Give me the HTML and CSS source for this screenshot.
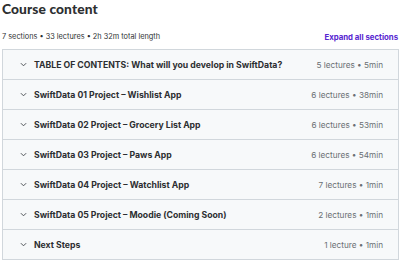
FILE: index.html
```html
<!DOCTYPE html>
<html>
<head>
<meta charset="utf-8">
<link rel="stylesheet" href="styles.css">
</head>
<body>
<div class="page">
  <h2 class="title">Course content</h2>
  <div class="meta">
    <span class="stats">7 sections • 33 lectures • 2h 32m total length</span>
    <span class="expand">Expand all sections</span>
  </div>
  <div class="list">
    <div class="row"><svg class="chev" viewBox="0 0 8 5"><path d="M1 1l3 3 3-3"/></svg><span class="name">TABLE OF CONTENTS: What will you develop in SwiftData?</span><span class="info">5 lectures • 5min</span></div>
    <div class="row"><svg class="chev" viewBox="0 0 8 5"><path d="M1 1l3 3 3-3"/></svg><span class="name">SwiftData 01 Project – Wishlist App</span><span class="info">6 lectures • 38min</span></div>
    <div class="row"><svg class="chev" viewBox="0 0 8 5"><path d="M1 1l3 3 3-3"/></svg><span class="name">SwiftData 02 Project – Grocery List App</span><span class="info">6 lectures • 53min</span></div>
    <div class="row"><svg class="chev" viewBox="0 0 8 5"><path d="M1 1l3 3 3-3"/></svg><span class="name">SwiftData 03 Project – Paws App</span><span class="info">6 lectures • 54min</span></div>
    <div class="row"><svg class="chev" viewBox="0 0 8 5"><path d="M1 1l3 3 3-3"/></svg><span class="name">SwiftData 04 Project – Watchlist App</span><span class="info">7 lectures • 1min</span></div>
    <div class="row"><svg class="chev" viewBox="0 0 8 5"><path d="M1 1l3 3 3-3"/></svg><span class="name">SwiftData 05 Project – Moodie (Coming Soon)</span><span class="info">2 lectures • 1min</span></div>
    <div class="row"><svg class="chev" viewBox="0 0 8 5"><path d="M1 1l3 3 3-3"/></svg><span class="name">Next Steps</span><span class="info">1 lecture • 1min</span></div>
  </div>
</div>
</body>
</html>
```
FILE: styles.css
```css
* { box-sizing: border-box; }
body { margin: 0; background: #fff; font-family: Inter, "Noto Sans", sans-serif; color: #2d2f31; }
.page { padding: 0 1px 0 2px; }
.title { margin: 0; font-family: Lato, Inter, sans-serif; font-size: 13.8px; font-weight: 900; line-height: 18px; letter-spacing: 0.1px; }
.meta { display: flex; justify-content: space-between; align-items: center; height: 31px; padding-top: 6px; }
.stats { font-size: 7.35px; color: #2d2f31; }
.expand { font-size: 7.8px; font-weight: 700; color: #5624d0; padding-right: 1px; }
.list { border: 1px solid #d1d7dc; border-bottom: none; }
.row { display: flex; align-items: center; height: 30px; background: #f7f9fa; border-bottom: 1px solid #d1d7dc; padding: 0 15px 0 17px; }
.chev { width: 7px; height: 5px; fill: none; stroke: #4a4e52; stroke-width: 1.1; margin-right: 7px; }
.name { flex: 1; font-size: 8.7px; font-weight: 700; }
.info { font-size: 8.2px; color: #6a6f73; }
```
